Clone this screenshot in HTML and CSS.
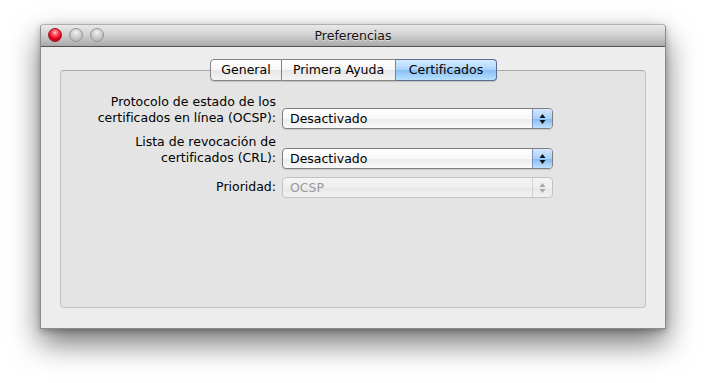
FILE: index.html
```html
<!DOCTYPE html>
<html lang="es">
<head>
<meta charset="utf-8">
<title>Preferencias</title>
<link rel="stylesheet" href="styles.css">
</head>
<body>
<div class="window">
  <div class="titlebar">
    <div class="lights">
      <span class="light red"></span>
      <span class="light grey"></span>
      <span class="light grey"></span>
    </div>
    <div class="title">Preferencias</div>
  </div>
  <div class="content">
    <div class="tabs">
      <div class="tab t1">General</div>
      <div class="tab t2">Primera Ayuda</div>
      <div class="tab t3 selected">Certificados</div>
    </div>
    <div class="tabbox">
      <div class="row r1">
        <div class="label">Protocolo de estado de los<br>certificados en línea (OCSP):</div>
        <div class="popup">
          <span class="value">Desactivado</span>
          <span class="arrows"><svg width="7" height="12" viewBox="0 0 7 12"><path d="M3.5 1 L6.5 5 L0.5 5 Z M3.5 11 L6.5 7 L0.5 7 Z" fill="#111"/></svg></span>
        </div>
      </div>
      <div class="row r2">
        <div class="label">Lista de revocación de<br>certificados (CRL):</div>
        <div class="popup">
          <span class="value">Desactivado</span>
          <span class="arrows"><svg width="7" height="12" viewBox="0 0 7 12"><path d="M3.5 1 L6.5 5 L0.5 5 Z M3.5 11 L6.5 7 L0.5 7 Z" fill="#111"/></svg></span>
        </div>
      </div>
      <div class="row r3">
        <div class="label">Prioridad:</div>
        <div class="popup disabled">
          <span class="value">OCSP</span>
          <span class="arrows"><svg width="7" height="12" viewBox="0 0 7 12"><path d="M3.5 1 L6.5 5 L0.5 5 Z M3.5 11 L6.5 7 L0.5 7 Z" fill="#a8a8a8"/></svg></span>
        </div>
      </div>
    </div>
  </div>
</div>
</body>
</html>
```
FILE: styles.css
```css
* { box-sizing: border-box; }
html, body { margin: 0; background: #ffffff; }
body {
  height: 383px;
  padding: 24px 0 0 40px;
  font-family: "DejaVu Sans", "Liberation Sans", sans-serif;
  font-size: 12.5px;
  color: #000;
}
.window {
  width: 626px;
  height: 305px;
  background: #ededed;
  border: 1px solid #8c8c8c;
  border-top-color: #b0b0b0;
  border-radius: 4px 4px 0 0;
  box-shadow: 0 14px 30px rgba(0,0,0,0.55), 0 2px 6px rgba(0,0,0,0.25);
  display: flex;
  flex-direction: column;
}
.titlebar {
  height: 22px;
  flex: none;
  background: linear-gradient(#e9e9e9, #cfcfcf 50%, #a9a9a9);
  border-bottom: 1px solid #515151;
  border-radius: 3px 3px 0 0;
  display: flex;
  align-items: center;
  position: relative;
}
.lights {
  display: flex;
  gap: 7px;
  padding-left: 7px;
  position: absolute;
  left: 0;
  top: 3px;
}
.light {
  width: 14px;
  height: 14px;
  border-radius: 50%;
  display: block;
}
.light.red {
  background: radial-gradient(circle at 50% 30%, #ffd0d0 0, #ff5a6a 25%, #e3001b 60%, #c8001a 80%, #ff4b5b 100%);
  border: 1px solid #9a1a24;
}
.light.grey {
  background: radial-gradient(circle at 50% 30%, #f2f2f2 0, #d6d6d6 35%, #b9b9b9 75%, #d4d4d4 100%);
  border: 1px solid #959595;
}
.title {
  flex: 1;
  text-align: center;
  font-size: 12.5px;
  color: #111;
  text-shadow: 0 1px 0 rgba(255,255,255,0.5);
}
.content {
  flex: 1;
  padding: 12px 19px 20px 19px;
  display: flex;
  flex-direction: column;
}
.tabs {
  display: flex;
  justify-content: center;
  position: relative;
  z-index: 2;
  height: 22px;
  margin-bottom: -11px;
  padding-left: 1px;
}
.tab {
  height: 22px;
  line-height: 20px;
  text-align: center;
  border: 1px solid #858585;
  border-left: none;
  background: linear-gradient(#ffffff, #f6f6f6 50%, #e6e6e6 51%, #f3f3f3);
  box-shadow: 0 1px 1px rgba(0,0,0,0.15);
}
.t1 { width: 72px; border-left: 1px solid #858585; border-radius: 4px 0 0 4px; }
.t2 { width: 114px; }
.t3 { width: 101px; border-radius: 0 4px 4px 0; }
.tab.selected {
  background: linear-gradient(#d6ebfe, #a9d3fa 50%, #86bff5 51%, #b9e0fd);
  border-color: #5b6d90;
}
.tabbox {
  flex: 1;
  background: #e4e4e4;
  border: 1px solid #c2c2c2;
  border-top-color: #a9a9a9;
  border-radius: 4px;
  padding-top: 23px;
  display: flex;
  flex-direction: column;
}
.row {
  display: flex;
  align-items: flex-end;
  gap: 6px;
}
.r2 { margin-top: 5px; }
.r3 { margin-top: 8px; }
.label {
  width: 215px;
  text-align: right;
  line-height: 16px;
  padding-bottom: 3px;
  white-space: nowrap;
}
.popup {
  width: 271px;
  height: 21px;
  border: 1px solid #7f7f7f;
  border-radius: 4px;
  background: linear-gradient(#ffffff, #f7f7f7 50%, #ececec 51%, #fafafa);
  box-shadow: 0 1px 1px rgba(0,0,0,0.12);
  display: flex;
  align-items: stretch;
  overflow: hidden;
}
.popup .value {
  flex: 1;
  padding-left: 7px;
  line-height: 19px;
}
.popup .arrows {
  width: 20px;
  border-left: 1px solid #7690c0;
  background: linear-gradient(#d4e8fd, #a9d2fa 50%, #7fbaf3 51%, #bfe2fd);
  display: flex;
  align-items: center;
  justify-content: center;
}
.popup.disabled {
  border-color: #c3c3c3;
  background: linear-gradient(#f4f4f4, #efefef 50%, #e8e8e8 51%, #f1f1f1);
  box-shadow: none;
  height: 21px;
}
.popup.disabled .value { color: #9a9a9a; }
.popup.disabled .arrows {
  background: transparent;
  border-left: 1px solid #d2d2d2;
}
```
